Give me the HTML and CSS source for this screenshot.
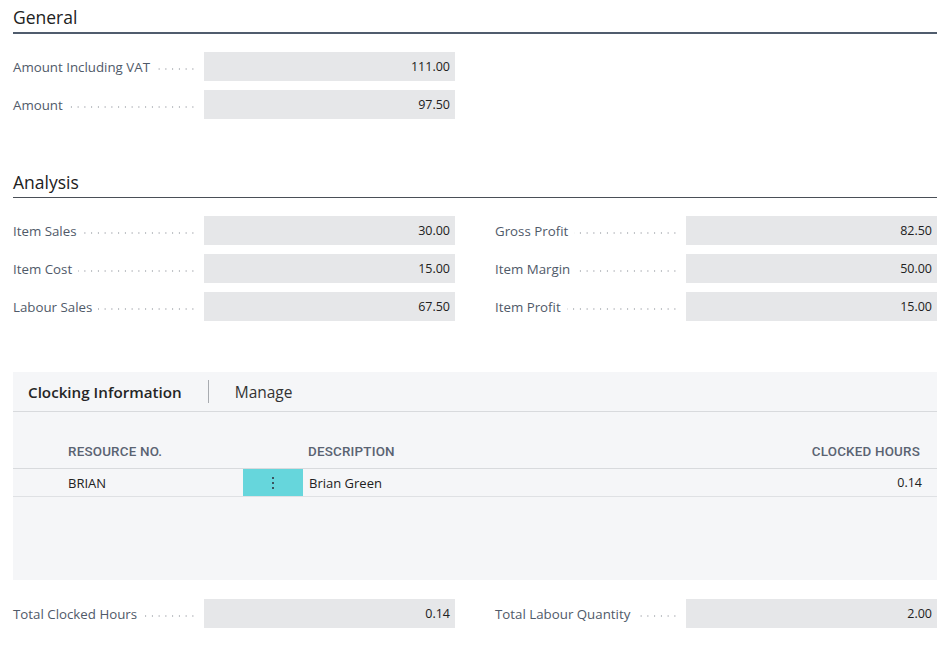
FILE: index.html
```html
<!DOCTYPE html>
<html>
<head>
<meta charset="utf-8">
<link rel="stylesheet" href="styles.css">
</head>
<body>
<div class="page">
  <section class="group">
    <h2 class="group-title strong">General</h2>
    <div class="fields">
      <div class="col">
        <div class="field"><span class="caption"><span class="label">Amount Including VAT</span></span><span class="value">111.00</span></div>
        <div class="field"><span class="caption"><span class="label">Amount</span></span><span class="value">97.50</span></div>
      </div>
      <div class="col"></div>
    </div>
  </section>

  <section class="group analysis">
    <h2 class="group-title">Analysis</h2>
    <div class="fields">
      <div class="col">
        <div class="field"><span class="caption"><span class="label">Item Sales</span></span><span class="value">30.00</span></div>
        <div class="field"><span class="caption"><span class="label">Item Cost</span></span><span class="value">15.00</span></div>
        <div class="field"><span class="caption"><span class="label">Labour Sales</span></span><span class="value">67.50</span></div>
      </div>
      <div class="col">
        <div class="field"><span class="caption"><span class="label">Gross Profit</span></span><span class="value">82.50</span></div>
        <div class="field"><span class="caption"><span class="label">Item Margin</span></span><span class="value">50.00</span></div>
        <div class="field"><span class="caption"><span class="label">Item Profit</span></span><span class="value">15.00</span></div>
      </div>
    </div>
  </section>

  <section class="part">
    <div class="tabs">
      <span class="tab-title">Clocking Information</span>
      <span class="tab-sep"></span>
      <span class="tab-action">Manage</span>
    </div>
    <div class="grid">
      <div class="grid-head">
        <span class="c-res">RESOURCE NO.</span>
        <span class="c-menu"></span>
        <span class="c-desc">DESCRIPTION</span>
        <span class="c-hours">CLOCKED HOURS</span>
      </div>
      <div class="grid-row">
        <span class="c-res">BRIAN</span>
        <span class="c-menu active"><span class="dots"></span></span>
        <span class="c-desc">Brian Green</span>
        <span class="c-hours">0.14</span>
      </div>
    </div>
  </section>

  <div class="fields totals">
    <div class="col">
      <div class="field"><span class="caption"><span class="label">Total Clocked Hours</span></span><span class="value">0.14</span></div>
    </div>
    <div class="col">
      <div class="field"><span class="caption"><span class="label">Total Labour Quantity</span></span><span class="value">2.00</span></div>
    </div>
  </div>
</div>
</body>
</html>
```

FILE: styles.css
```css
html, body {
  margin: 0;
  padding: 0;
  background: #ffffff;
}
body {
  font-family: "Open Sans", "Noto Sans", "Liberation Sans", sans-serif;
  font-size: 12.5px;
  color: #212121;
}
.page {
  width: 924px;
  padding-left: 13px;
}
.group-title {
  margin: 0;
  font-size: 17.5px;
  font-weight: 400;
  color: #212121;
  height: 32px;
  line-height: 34px;
  border-bottom: 1px solid #4a4f57;
}
.group-title.strong {
  border-bottom: 2px solid #505c6d;
}
.fields {
  display: flex;
  gap: 40px;
  padding-top: 18px;
}
.analysis {
  margin-top: 46px;
}
.col {
  flex: 1;
  display: flex;
  flex-direction: column;
  gap: 9px;
}
.field {
  display: flex;
  align-items: center;
  height: 29px;
}
.caption {
  width: 191px;
  flex: none;
  height: 29px;
  display: flex;
  align-items: center;
  background-image: radial-gradient(circle, #b8bbc0 0.7px, transparent 0.95px);
  background-size: 6.75px 4px;
  background-repeat: repeat-x;
  background-position: 1px 15px;
  background-clip: content-box;
  padding-right: 9px;
  box-sizing: border-box;
}
.label {
  color: #505a69;
  white-space: nowrap;
  font-size: 13.3px;
  background: #ffffff;
  padding-right: 6px;
}
.value {
  width: 251px;
  flex: none;
  height: 29px;
  line-height: 29px;
  background: #e6e7e9;
  text-align: right;
  padding-right: 5px;
  box-sizing: border-box;
  color: #212121;
}
.part {
  margin-top: 51px;
  background: #f5f6f8;
  height: 208px;
}
.tabs {
  display: flex;
  align-items: center;
  height: 39px;
  border-bottom: 1px solid #d8dadd;
  padding-left: 15px;
}
.tab-title {
  font-size: 15.2px;
  font-weight: 600;
  color: #262626;
}
.tab-sep {
  width: 1px;
  height: 23px;
  background: #a8abb0;
  margin: 0 26px 0 26px;
}
.tab-action {
  font-size: 15.5px;
  color: #333;
}
.grid-head, .grid-row {
  display: flex;
  align-items: center;
}
.grid-head {
  height: 56px;
  align-items: flex-end;
  border-bottom: 1px solid #d8dadd;
  font-family: "Roboto", "Liberation Sans", sans-serif;
  font-weight: 500;
  font-size: 13.4px;
  color: #5a6372;
  letter-spacing: 0.2px;
}
.grid-head > span {
  padding-bottom: 9px;
}
.grid-row {
  height: 27px;
  border-bottom: 1px solid #dfe1e4;
  font-size: 13px;
}
.c-res {
  width: 175px;
  padding-left: 55px;
  flex: none;
}
.c-menu {
  width: 60px;
  flex: none;
  align-self: stretch;
  display: flex;
  align-items: center;
  justify-content: center;
}
.grid-head .c-menu { padding-bottom: 0; }
.c-menu.active {
  background: #66d6dc;
}
.dots {
  width: 2px;
  height: 2px;
  background: #3b5560;
  box-shadow: 0 -5px 0 #3b5560, 0 5px 0 #3b5560;
}
.c-desc {
  flex: 1;
  padding-left: 6px;
}
.grid-head .c-desc { padding-left: 5px; }
.c-hours {
  width: 200px;
  text-align: right;
  padding-right: 17px;
}
.grid-row .c-hours { padding-right: 15px; font-size: 12.5px; }
.totals {
  padding-top: 19px;
}
```
